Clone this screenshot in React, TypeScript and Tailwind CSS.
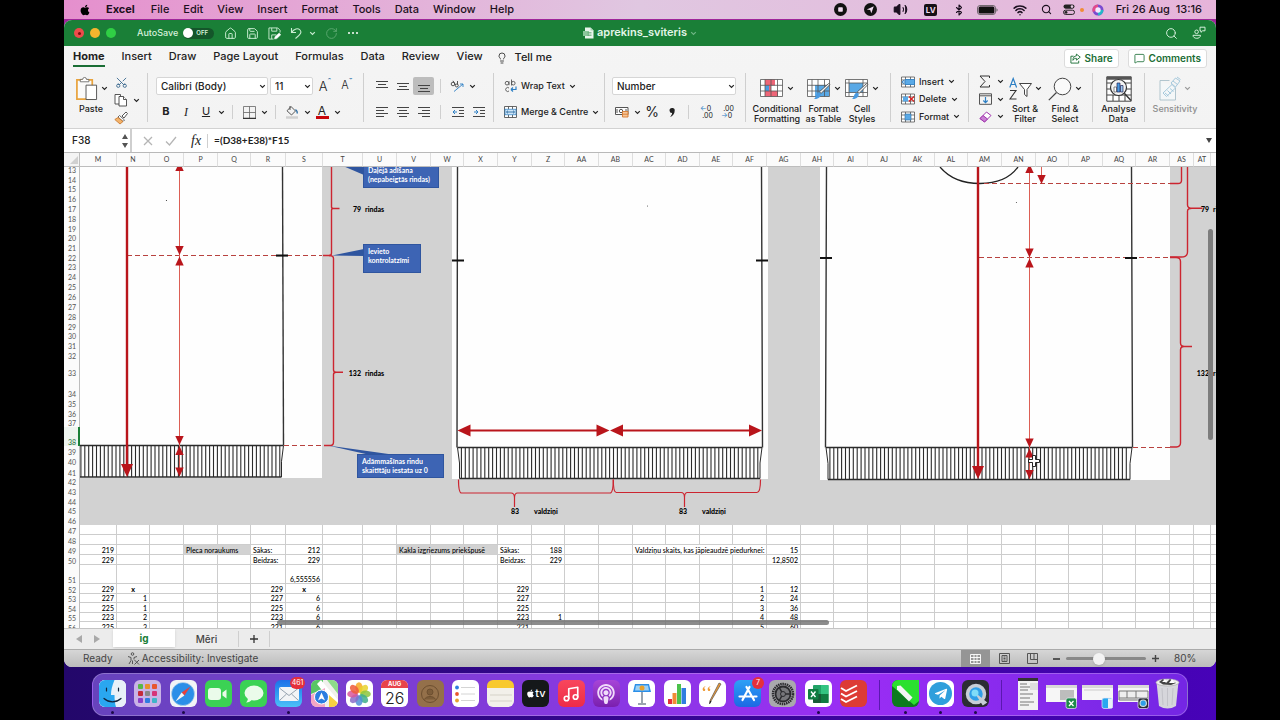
import React from "react";
import {
  Bluetooth,
  Home,
  Lightbulb,
  MessageSquare,
  Music,
  RotateCw,
  Save,
  Scissors,
  Search,
  Volume2,
  Wifi,
} from "lucide-react";
import { FaApple, FaPodcast, FaTelegramPlane } from "react-icons/fa";

const RED = "#b9151b";

const columns: [string, number][] = [
  ["M", 37], ["N", 33], ["O", 34], ["P", 34], ["Q", 33], ["R", 35], ["S", 37],
  ["T", 40], ["U", 34], ["V", 34], ["W", 33], ["X", 34], ["Y", 34], ["Z", 33],
  ["AA", 34], ["AB", 34], ["AC", 33], ["AD", 34], ["AE", 33], ["AF", 34],
  ["AG", 34], ["AH", 33], ["AI", 34], ["AJ", 33], ["AK", 34], ["AL", 33],
  ["AM", 34], ["AN", 34], ["AO", 33], ["AP", 34], ["AQ", 33], ["AR", 34],
  ["AS", 24], ["AT", 17], ["", 34],
];

// row number, height
const rows: [number, number][] = [
  [13, 7], [14, 10], [15, 9], [16, 10], [17, 10], [18, 10], [19, 10], [20, 9],
  [21, 10], [22, 10], [23, 9], [24, 10], [25, 10], [26, 10], [27, 10], [28, 10],
  [29, 10], [30, 9], [31, 10], [32, 10], [33, 17], [34, 21], [35, 10], [36, 10],
  [37, 9], [38, 19], [39, 10], [40, 10], [41, 11], [42, 9], [43, 10], [44, 10],
  [45, 9], [46, 10], [47, 10], [48, 10], [49, 10], [50, 10], [51, 19], [52, 10],
  [53, 9], [54, 10], [55, 9], [56, 10],
];

type Cell = { v: string; a?: "l" | "c"; span?: number; fill?: boolean; bold?: boolean };

const cells: Record<string, Cell> = {
  T17: { v: "79", bold: true }, U17: { v: "rindas", a: "l", bold: true },
  T33: { v: "132", bold: true }, U33: { v: "rindas", a: "l", bold: true },
  AT17: { v: "79", bold: true }, AT33: { v: "132", bold: true },
  "17": { v: "rindas", a: "l", bold: true }, "33": { v: "rindas", a: "l", bold: true },
  Y45: { v: "83", a: "c", bold: true }, Z45: { v: "valdziņi", a: "l", bold: true },
  AD45: { v: "83", a: "c", bold: true }, AE45: { v: "valdziņi", a: "l", bold: true },
  M49: { v: "219" }, M50: { v: "229" }, M52: { v: "229" }, M53: { v: "227" },
  M54: { v: "225" }, M55: { v: "223" }, M56: { v: "225" },
  N52: { v: "x", a: "c", bold: true }, N53: { v: "1" }, N54: { v: "1" }, N55: { v: "2" }, N56: { v: "3" },
  P49: { v: "Pleca noraukums", a: "l", span: 2, fill: true },
  R49: { v: "Sākas:", a: "l" }, R50: { v: "Beidzas:", a: "l" },
  R52: { v: "229" }, R53: { v: "227" }, R54: { v: "225" }, R55: { v: "223" }, R56: { v: "221" },
  S49: { v: "212" }, S50: { v: "229" }, S51: { v: "6,555556" }, S52: { v: "x", a: "c", bold: true },
  S53: { v: "6" }, S54: { v: "6" }, S55: { v: "6" }, S56: { v: "6" },
  V49: { v: "Kakla izgriezums priekšpusē", a: "l", span: 3, fill: true },
  Y49: { v: "Sākas:", a: "l" }, Y50: { v: "Beidzas:", a: "l" },
  Y52: { v: "229" }, Y53: { v: "227" }, Y54: { v: "225" }, Y55: { v: "223" }, Y56: { v: "221" },
  Z49: { v: "188" }, Z50: { v: "229" }, Z55: { v: "1" },
  AC49: { v: "Valdziņu skaits, kas jāpieaudzē piedurknei:", a: "l", span: 4 },
  AG49: { v: "15" }, AG50: { v: "12,8502" },
  AF52: { v: "1" }, AF53: { v: "2" }, AF54: { v: "3" }, AF55: { v: "4" }, AF56: { v: "5" },
  AG52: { v: "12" }, AG53: { v: "24" }, AG54: { v: "36" }, AG55: { v: "48" }, AG56: { v: "60" },
};

function Chev({ className = "text-[#222]" }: { className?: string }) {
  return (
    <svg viewBox="0 0 7 5" className={`h-[5px] w-[7px] shrink-0 ${className}`}>
      <path d="M1.2 1.2 3.5 3.5 5.8 1.2" fill="none" stroke="currentColor" strokeWidth="1.2" />
    </svg>
  );
}

function Sep({ tall = false }: { tall?: boolean }) {
  return <div className={tall ? "h-[49px] w-px shrink-0 bg-[#cfcfcf]" : "mx-[6px] h-3.5 w-px shrink-0 bg-[#cfcfcf]"} />;
}

function Tool({ label, className = "w-5", children }: { label: string; className?: string; children: React.ReactNode }) {
  return (
    <button aria-label={label} className={`flex h-[18px] shrink-0 items-center justify-center ${className}`}>
      {children}
    </button>
  );
}

function Drop({ label }: { label: string }) {
  return (
    <Tool label={label} className="w-2.5">
      <Chev />
    </Tool>
  );
}

function Lines({ d }: { d: string }) {
  return (
    <svg viewBox="0 0 12 12" className="h-3 w-3">
      <path d={d} stroke="#444" strokeWidth="1" />
    </svg>
  );
}

function MenuBar() {
  const items = ["File", "Edit", "View", "Insert", "Format", "Tools", "Data", "Window", "Help"];
  return (
    <nav className="flex h-[19px] shrink-0 items-center overflow-hidden bg-linear-to-r from-[#e58fcd] via-[#e0c7e1] to-[#e6b4da] pr-3.5 pl-[15px] text-[11px] text-[#1c1020]">
      <FaApple className="size-3 shrink-0 text-black" />
      <div className="ml-[15px] flex gap-[14px] whitespace-nowrap">
        <a href="#" className="mr-0.5 font-bold">Excel</a>
        {items.map((i) => (
          <a key={i} href="#" className="font-medium">{i}</a>
        ))}
      </div>
      <div className="ml-auto flex items-center [&>span]:flex [&>span]:shrink-0 [&>span]:justify-center">
        <span className="w-[30px]">
          <svg viewBox="0 0 13 13" className="size-[13px]">
            <circle cx="6.5" cy="6.5" r="6.5" fill="#111" />
            <rect x="4.2" y="4.2" width="4.6" height="4.6" rx="0.8" fill="#f2dcf0" />
          </svg>
        </span>
        <span className="w-[30px]">
          <svg viewBox="0 0 13 13" className="size-[13px]">
            <circle cx="6.5" cy="6.5" r="6.5" fill="#111" />
            <path d="M2.8 6.6 9.8 3.2 7.3 10.2 6.2 7.1z" fill="#f2dcf0" />
          </svg>
        </span>
        <span className="w-[30px]"><Volume2 className="size-[15px]" fill="currentColor" strokeWidth={1.8} /></span>
        <span className="w-[30px]">
          <span className="flex h-3 w-[13px] items-center justify-center rounded-[2px] bg-[#161016] text-[8px] font-bold text-[#f2dcf0]">LV</span>
        </span>
        <span className="w-[26px]"><Bluetooth className="size-3" strokeWidth={2.2} /></span>
        <span className="w-[32px]">
          <svg viewBox="0 0 21 10" className="h-2.5 w-[21px]">
            <rect x="0.5" y="0.5" width="18" height="9" rx="2.5" fill="none" stroke="#555" strokeWidth="0.8" />
            <rect x="1.6" y="1.6" width="15.8" height="6.8" rx="1.5" fill="#111" />
            <path d="M19.5 3.3c1.4.6 1.4 2.8 0 3.4z" fill="#555" />
          </svg>
        </span>
        <span className="w-[32px]"><Wifi className="size-[14px]" strokeWidth={2.6} /></span>
        <span className="w-[22px]"><Search className="size-[11px]" strokeWidth={2.4} /></span>
        <span className="w-[22px]">
          <svg viewBox="0 0 12 11" className="h-[11px] w-3">
            <rect x="0.5" y="0.5" width="11" height="4.2" rx="2.1" fill="#222" />
            <circle cx="9" cy="2.6" r="1.3" fill="#e6c8e2" />
            <rect x="0.5" y="6.2" width="11" height="4.2" rx="2.1" fill="none" stroke="#222" />
            <circle cx="3" cy="8.3" r="1.4" fill="#222" />
          </svg>
        </span>
        <i className="size-[4px] rounded-full bg-[#f08c35]" />
        <span className="w-[28px]">
          <svg viewBox="0 0 12 12" className="size-3">
            <circle cx="6" cy="6" r="5.5" fill="#7a4bd0" />
            <path d="M6 .5A5.5 5.5 0 0 0 .8 8L6 6z" fill="#e24a8a" />
            <path d="M6 11.5A5.5 5.5 0 0 0 11.5 6L6 6z" fill="#26b7c6" />
            <circle cx="6" cy="6" r="2.7" fill="#f4e8ff" />
          </svg>
        </span>
        <time className="ml-1 font-medium whitespace-pre">Fri 26 Aug  13:16</time>
      </div>
    </nav>
  );
}

function TitleBar() {
  return (
    <div className="relative flex h-[26px] shrink-0 items-center bg-[#1a7f37] px-2.5 text-white">
      <div className="flex gap-1.5">
        <button aria-label="Close" className="flex size-2.5 items-center justify-center rounded-full bg-[#ee4b4b]">
          <i className="size-[3px] rounded-full bg-[#7a0d0d]" />
        </button>
        <button aria-label="Minimise" className="size-2.5 rounded-full bg-[#f5b52e]" />
        <button aria-label="Zoom" className="size-2.5 rounded-full bg-[#30cf45]" />
      </div>
      <span className="ml-[21px] text-[9px] font-medium text-[#d6f0dc]">AutoSave</span>
      <button role="switch" aria-checked="false" className="ml-[5px] flex h-[11px] w-[31px] items-center rounded-full bg-[#14562a] text-[6px] font-semibold text-[#d6f0dc]">
        <i className="mr-[3px] size-[10px] rounded-full bg-white" />
        OFF
      </button>
      <div className="ml-2.5 flex items-center gap-[9px] text-[#c9ecd1]">
        <Home className="size-[13px]" strokeWidth={1.8} />
        <Save className="size-[13px]" strokeWidth={1.8} />
        <svg viewBox="0 0 14 14" className="size-[13px]" fill="none" stroke="currentColor">
          <path d="M6 13H1V1h9.500L13 3.500V6M4 1v3.500h5.500V1M4 13V8.500h5" />
          <path d="m7 13 .5-2.500 4.500-4 1.800 1.800-4.300 4.200z" fill="#fff" stroke="#fff" strokeWidth="0.500" />
        </svg>
        <svg viewBox="0 0 12 12" className="size-3" fill="none" stroke="currentColor" strokeWidth="1.100">
          <path d="M1.500 1v4.500H6M1.500 5.500C4 1.500 8 .8 10 3s.8 4.500-4.500 8.500" />
        </svg>
        <Chev className="-ml-0.5 text-[#c9ecd1]" />
        <RotateCw className="size-[13px] opacity-40" strokeWidth={1.6} />
        <svg viewBox="0 0 12 4" className="h-1 w-3" fill="#fff">
          <circle cx="2" cy="2" r="1" />
          <circle cx="6" cy="2" r="1" />
          <circle cx="10" cy="2" r="1" />
        </svg>
      </div>
      <div className="absolute inset-x-0 flex items-center justify-center gap-[3px]">
        <svg viewBox="0 0 11 12" className="h-3 w-[11px]">
          <path d="M2 .5h5.5l3 3v8H2z" fill="#e9f5ec" />
          <path d="M7.5.5v3h3" fill="#a8d5b3" />
          <rect x="0" y="4" width="6" height="5" fill="#8cc79c" />
          <path d="M4.5 5.5h4M4.5 7h4M4.5 8.500h4" stroke="#5ea873" strokeWidth="0.7" />
        </svg>
        <h1 className="text-[11px] font-semibold text-[#e4f6e8]">aprekins_sviteris</h1>
        <Chev className="text-[#6fb685]" />
      </div>
      <div className="ml-auto flex items-center gap-[14px] text-[#d6f0dc]">
        <Search className="size-[13px]" strokeWidth={1.8} />
        <svg viewBox="0 0 14 14" className="size-[14px]" fill="none" stroke="currentColor">
          <circle cx="4.6" cy="5.8" r="1.8" />
          <path d="M1 9.3h7.5c0 4-7.5 4-7.5 0z" />
          <path d="M8 1.2h5v3.6h-2.4L9 6.3V4.8H8z" />
        </svg>
      </div>
    </div>
  );
}

function RibbonTabs() {
  const tabs = ["Home", "Insert", "Draw", "Page Layout", "Formulas", "Data", "Review", "View"];
  return (
    <div className="flex h-[23px] shrink-0 items-center gap-[17px] px-[9px] text-[11px] font-medium text-[#222]">
      {tabs.map((t) => (
        <button
          key={t}
          className={
            t === "Home"
              ? "h-[18px] border-b-2 border-[#1a6e35] font-bold whitespace-nowrap"
              : "h-[18px] border-b-2 border-transparent whitespace-nowrap"
          }
        >
          {t}
        </button>
      ))}
      <button className="-ml-1 flex items-center gap-[7px] whitespace-nowrap">
        <Lightbulb className="size-3" strokeWidth={1.6} />
        Tell me
      </button>
      <div className="ml-auto flex gap-[9px] pt-0.5 text-[10px] font-semibold text-[#1a6e35]">
        <button className="flex h-[19px] items-center gap-1 rounded-[3px] border border-[#dcdcdc] bg-white px-[5px]">
          <svg viewBox="0 0 12 12" className="size-[11px]" fill="none" stroke="currentColor">
            <path d="M4 3.500H1v7.500h8.500V8.500" />
            <path d="M7 1.200 11.200 4.500 7 7.800V5.800C5 5.800 4 6.500 3.200 8c0-3 1.500-4.700 3.800-4.900z" />
          </svg>
          Share
        </button>
        <button className="flex h-[19px] items-center gap-1 rounded-[3px] border border-[#dcdcdc] bg-white px-[5px]">
          <MessageSquare className="size-[11px]" strokeWidth={1.8} />
          Comments
        </button>
      </div>
    </div>
  );
}

function BigTool({ lines, className, drop = true, muted = false, children }: {
  lines: string[]; className: string; drop?: boolean; muted?: boolean; children: React.ReactNode;
}) {
  return (
    <button className={`flex shrink-0 flex-col items-center ${className}`}>
      <span className="flex h-[31px] shrink-0 items-center gap-[3px]">
        {children}
        {drop && <Chev className={muted ? "text-[#999]" : "text-[#222]"} />}
      </span>
      {lines.map((l) => (
        <span key={l} className={`leading-[10px] whitespace-nowrap ${muted ? "text-[#8f8f8f]" : ""}`}>{l}</span>
      ))}
    </button>
  );
}

function TableIcon({ kind }: { kind: "cond" | "table" | "cell" }) {
  return (
    <svg viewBox="0 0 24 22" className="h-[22px] w-6 shrink-0">
      <rect x="0.5" y="1.5" width="22" height="17" fill="#fff" />
      {kind === "cond" && (
        <>
          <path d="M5 1.5h10v6H5zM5 13h13v5.5H5z" fill="#ee6577" />
          <path d="M5 7.5h6V13H5z" fill="#ee6577" />
          <path d="M5 7.5h4V13H5z" fill="#4a9ae0" />
        </>
      )}
      {kind === "table" && <path d="M8 7h14v11.5H8z" fill="#5aa9e6" />}
      {kind === "cell" && <path d="M4 5h14v9.500H4z" fill="#5aa9e6" />}
      {kind === "cell" ? (
        <path d="M.5 1.500h22v17H.5zM4 1.500v17M18 1.500v17M.5 5h22M.5 14.500h22" fill="none" stroke="#555" strokeWidth="0.8" />
      ) : (
        <path d="M.5 1.500h22v17H.5zM5 1.500v17M11 1.500v17M17.500 1.500v17M.5 7.300h22M.5 13h22" fill="none" stroke="#555" strokeWidth="0.8" />
      )}
      {kind !== "cond" && (
        <>
          <path d="M23 6.500 14 15.500l-1.500-1.800L21.500 5.600z" fill="#f2f2f2" stroke="#444" strokeWidth="0.8" />
          <path d="M13.500 15.500c1 3-2 6-6.500 5.500 2-1 1.500-5 4.500-6.500z" fill="#4a9ae0" />
        </>
      )}
    </svg>
  );
}

function RowIcon({ kind }: { kind: "insert" | "delete" | "format" }) {
  return (
    <svg viewBox="0 0 14 12" className="h-3 w-3.5">
      <path d="M.5 1h13v10H.5zM.5 4h13M.5 8h13M4.500 1v10M9.500 1v10" fill="#fff" stroke="#555" strokeWidth="0.8" />
      {kind === "insert" && <path d="M4 3.500h9.500v5H4zM4 6 1 6m0 0 2-2M1 6l2 2" fill="#5aa9e6" stroke="#2c7fc4" strokeWidth="0.8" />}
      {kind === "delete" && (
        <>
          <rect x="2" y="3.500" width="5" height="5" fill="#5aa9e6" />
          <path d="M8 3.500l5 5M13 3.500l-5 5" stroke="#d22" strokeWidth="1.200" />
        </>
      )}
      {kind === "format" && <rect x="4" y="3" width="6" height="6" fill="#5aa9e6" stroke="#2c6ea4" strokeWidth="0.6" />}
    </svg>
  );
}

function Ribbon() {
  return (
    <div className="flex h-[60px] shrink-0 items-start overflow-hidden border-b border-[#d2d2d2] pt-1 text-[9px] font-medium text-[#222]">
      {/* Clipboard */}
      <div className="flex w-[83px] shrink-0 pl-2.5">
        <BigTool lines={["Paste"]} className="w-[34px]">
          <svg viewBox="0 0 24 26" className="h-[25px] w-[23px] shrink-0">
            <path d="M2 4h16v20H2z" fill="#fafafa" stroke="#e8a33d" strokeWidth="1.800" />
            <path d="M5.500 6V3.500h2.500a2 2 0 0 1 4 0h2.500V6z" fill="#fff" stroke="#666" strokeWidth="0.900" />
            <path d="M11.500 9.500h11v15h-11z" fill="#fff" stroke="#555" strokeWidth="1" />
          </svg>
        </BigTool>
        <div className="ml-[3px] w-[30px]">
          <Tool label="Cut"><Scissors className="size-[13px] -rotate-90 text-[#35658c]" strokeWidth={1.6} /></Tool>
          <div className="flex">
            <Tool label="Copy">
              <svg viewBox="0 0 14 14" className="size-3.5" fill="#fff" stroke="#444" strokeWidth="0.900">
                <path d="M1 1.500h5.500V11H1z" />
                <path d="M5 3.500h4.500l3 3V13H5z" />
                <path d="M9.500 3.500v3h3" />
              </svg>
            </Tool>
            <Drop label="Copy options" />
          </div>
          <Tool label="Format painter">
            <svg viewBox="0 0 14 14" className="size-3.5">
              <path d="M8 5 12 1l1.500 1.500L10 7z" fill="#fff" stroke="#555" />
              <path d="M5.500 4.500 10.500 9 9 10.500 4 6z" fill="#fff" stroke="#555" strokeWidth="0.900" />
              <path d="M4 6.500.800 8.500 6 13l3-2.500z" fill="#f3b36b" stroke="#c5742a" strokeWidth="0.800" />
            </svg>
          </Tool>
        </div>
      </div>
      <Sep tall />
      {/* Font */}
      <div className="flex w-[215px] shrink-0 flex-col gap-2 pt-1 pl-2">
        <div className="flex h-[18px] items-center gap-0.5 text-[10px]">
          <label className="relative flex items-center">
            <select aria-label="Font" className="h-[18px] w-[112px] appearance-none rounded-[2px] border border-[#d6d6d6] bg-white pl-1">
              <option>Calibri (Body)</option>
            </select>
            <Chev className="pointer-events-none absolute right-0.5" />
          </label>
          <label className="relative flex items-center">
            <select aria-label="Font size" className="h-[18px] w-[43px] appearance-none rounded-[2px] border border-[#d6d6d6] bg-white pl-1">
              <option>11</option>
            </select>
            <Chev className="pointer-events-none absolute right-0.5" />
          </label>
          <Tool label="Increase font size"><span className="text-[13px] font-light">A</span><sup className="text-[9px] text-[#2c6ea4]">ˆ</sup></Tool>
          <Tool label="Decrease font size"><span className="text-[11px] font-light">A</span><sup className="text-[9px] text-[#2c6ea4]">ˇ</sup></Tool>
        </div>
        <div className="flex h-[18px] items-center text-[11px]">
          <Tool label="Bold"><b>B</b></Tool>
          <Tool label="Italic"><span className="font-['Liberation_Serif'] text-xs italic">I</span></Tool>
          <Tool label="Underline"><span className="font-normal underline">U</span></Tool>
          <Drop label="Underline options" />
          <Sep />
          <Tool label="Borders">
            <svg viewBox="0 0 13 13" className="size-[13px]" fill="none" stroke="#666">
              <path d="M.5 12.500V.5h12v12M6.500.5v12M.5 6.500h12" strokeWidth="0.800" />
              <path d="M0 12.300h13" stroke="#333" strokeWidth="1.300" />
            </svg>
          </Tool>
          <Drop label="Border options" />
          <Sep />
          <Tool label="Fill colour">
            <svg viewBox="0 0 14 14" className="size-3.5" fill="none" stroke="#444" strokeWidth="0.900">
              <path d="M6 1.500 10.500 6 6.500 10 2 5.800zM5 1v4" />
              <path d="M10.500 4.500c1.500 1 2 2 1.800 4" stroke="#2c6ea4" strokeWidth="1.400" />
              <path d="M1 12.500h12" stroke="#d0d0d0" strokeWidth="2.400" />
            </svg>
          </Tool>
          <Drop label="Fill options" />
          <Tool label="Font colour" className="w-5 flex-col">
            <span className="text-xs leading-[11px] font-normal">A</span>
            <i className="h-[3px] w-[13px] bg-[#c8060b]" />
          </Tool>
          <Drop label="Font colour options" />
        </div>
      </div>
      <Sep tall />
      {/* Alignment */}
      <div className="flex w-[129px] shrink-0 flex-col gap-2 pt-1 pl-[7px]">
        <div className="flex h-[18px] items-center">
          <Tool label="Top align" className="w-[21px]"><Lines d="M0 1.500h12M2 4.500h8M0 7.500h12" /></Tool>
          <Tool label="Middle align" className="w-[21px]"><Lines d="M0 3.500h12M2 6.500h8M0 9.500h12" /></Tool>
          <Tool label="Bottom align" className="w-[21px] rounded-[2px] bg-[#bdbdbd]"><Lines d="M0 5.500h12M2 8.500h8M0 11.500h12" /></Tool>
          <Sep />
          <Tool label="Orientation">
            <svg viewBox="0 0 14 12" className="h-3 w-3.5" fill="none" stroke="#444" strokeWidth="0.900">
              <circle cx="3" cy="4" r="1.800" />
              <path d="M3 .8 5.500 5M7.500 1v3.500" />
              <circle cx="6.800" cy="5.500" r="1.500" />
              <path d="M4 11.500 13 4M13 4h-3M13 4v3" stroke="#2c7fc4" />
            </svg>
          </Tool>
          <Drop label="Orientation options" />
        </div>
        <div className="flex h-[18px] items-center">
          <Tool label="Left align" className="w-[21px]"><Lines d="M0 1.500h12M0 4.500h8M0 7.500h12M0 10.500h8" /></Tool>
          <Tool label="Centre" className="w-[21px]"><Lines d="M0 1.500h12M2 4.500h8M0 7.500h12M2 10.500h8" /></Tool>
          <Tool label="Right align" className="w-[21px]"><Lines d="M0 1.500h12M4 4.500h8M0 7.500h12M4 10.500h8" /></Tool>
          <Sep />
          {["M5 6H1M1 6l2-2M1 6l2 2", "M1 6h4M5 6 3 4M5 6 3 8"].map((d) => (
            <Tool key={d} label="Indent" className="w-[21px]">
              <svg viewBox="0 0 12 12" className="size-3" fill="none">
                <path d="M0 1.500h12M7 4.500h5M7 7.500h5M0 10.500h12" stroke="#444" />
                <path d={d} stroke="#2c7fc4" />
              </svg>
            </Tool>
          ))}
        </div>
      </div>
      <Sep tall />
      <div className="flex w-[110px] shrink-0 flex-col gap-2 pt-1 pl-2.5 whitespace-nowrap">
        <button className="flex h-[18px] items-center gap-1">
          <svg viewBox="0 0 13 14" className="h-3.5 w-[13px]" fill="none" stroke="#555" strokeWidth="0.900">
            <circle cx="3" cy="4.200" r="1.800" />
            <path d="M5 2.200v4M7.500.5v6" />
            <circle cx="9.300" cy="4.200" r="1.800" />
            <path d="M5 9a2 2 0 1 0 0 3" />
            <path d="M12 7.500v3H7M7 10.500l2-2M7 10.500l2 2" stroke="#2c7fc4" strokeWidth="1.200" />
          </svg>
          Wrap Text
          <Chev />
        </button>
        <button className="flex h-[18px] items-center gap-1">
          <svg viewBox="0 0 13 12" className="h-3 w-[13px]">
            <path d="M.5.5h12v11H.5zM4.500.5v11M8.500.5v11" fill="#fff" stroke="#555" strokeWidth="0.900" />
            <rect x="1" y="3.200" width="11" height="5.600" fill="#cfe6f8" stroke="#2c7fc4" strokeWidth="0.700" />
            <path d="M2.500 6h8M2.500 6 4 4.600M2.500 6 4 7.400M10.500 6 9 4.600M10.500 6 9 7.400" stroke="#2c6ea4" strokeWidth="0.900" fill="none" />
          </svg>
          Merge &amp; Centre
          <Chev />
        </button>
      </div>
      <Sep tall />
      {/* Number */}
      <div className="flex w-[140px] shrink-0 flex-col gap-2 pt-1 pl-[7px]">
        <label className="relative flex items-center text-[10px]">
          <select aria-label="Number format" className="h-[18px] w-[124px] appearance-none rounded-[2px] border border-[#d6d6d6] bg-white pl-1">
            <option>Number</option>
          </select>
          <Chev className="pointer-events-none absolute right-2.5" />
        </label>
        <div className="flex h-[18px] items-center">
          <Tool label="Currency">
            <svg viewBox="0 0 14 12" className="h-3 w-3.5">
              <path d="M.5 1.500h12.500v7H.5z" fill="#fff" stroke="#555" />
              <circle cx="6" cy="5" r="1.700" fill="none" stroke="#555" />
              <path d="M2 3v4M11 3v2" stroke="#555" />
              <path d="M7.500 5.500h5.500v5.500H7.500z" fill="#f6c79b" stroke="#d8792c" strokeWidth="0.900" />
              <path d="M7.500 8.200H13" stroke="#d8792c" strokeWidth="0.900" />
            </svg>
          </Tool>
          <Drop label="Currency options" />
          <Tool label="Percent"><span className="text-sm font-normal">%</span></Tool>
          <Tool label="Comma style">
            <svg viewBox="0 0 8 11" className="h-[11px] w-2">
              <path d="M4 1a2.500 2.500 0 0 1 2.700 2.700C6.700 7 4.500 9.300 2 10c1.300-1.300 2-2.500 2.100-3.900A2.500 2.500 0 1 1 4 1z" fill="#222" />
            </svg>
          </Tool>
          <Sep />
          <Tool label="Increase decimal" className="w-[21px] flex-col text-[7px] leading-[7px] font-normal">
            <span><span className="text-[#2c7fc4]">←</span>0</span>
            <span className="pl-1">.00</span>
          </Tool>
          <Tool label="Decrease decimal" className="w-[21px] flex-col text-[7px] leading-[7px] font-normal">
            <span className="pl-1">.00</span>
            <span><span className="text-[#2c7fc4]">→</span>0</span>
          </Tool>
        </div>
      </div>
      <Sep tall />
      {/* Styles */}
      <div className="flex w-[144px] shrink-0">
        <BigTool lines={["Conditional", "Formatting"]} className="w-[62px]"><TableIcon kind="cond" /></BigTool>
        <BigTool lines={["Format", "as Table"]} className="w-[31px]"><TableIcon kind="table" /></BigTool>
        <BigTool lines={["Cell", "Styles"]} className="w-[46px]"><TableIcon kind="cell" /></BigTool>
      </div>
      <Sep tall />
      {/* Cells */}
      <div className="w-[77px] shrink-0 pl-2.5">
        <button className="flex h-[17px] items-center gap-1"><RowIcon kind="insert" />Insert<Chev /></button>
        <button className="flex h-[18px] items-center gap-1"><RowIcon kind="delete" />Delete<Chev /></button>
        <button className="flex h-[17px] items-center gap-1"><RowIcon kind="format" />Format<Chev /></button>
      </div>
      <Sep tall />
      {/* Editing */}
      <div className="flex w-[123px] shrink-0 pl-[6px]">
        <div className="w-[30px] shrink-0">
          <div className="flex h-[17px] items-center">
            <Tool label="AutoSum">
              <svg viewBox="0 0 12 13" className="h-[13px] w-3">
                <path d="M10.500 3V1H1l5 5.500L1 12h9.500v-2" fill="none" stroke="#333" />
              </svg>
            </Tool>
            <Drop label="AutoSum options" />
          </div>
          <div className="flex h-[18px] items-center">
            <Tool label="Fill">
              <svg viewBox="0 0 13 12" className="h-3 w-[13px]" fill="none">
                <path d="M.5.8h12v10.500H.5zM.5 2.800h12" stroke="#555" />
                <path d="M6.500 4v5.500M4.300 7.500l2.200 2.200 2.200-2.200" stroke="#2c7fc4" strokeWidth="1.200" />
              </svg>
            </Tool>
            <Drop label="Fill options" />
          </div>
          <div className="flex h-[17px] items-center">
            <Tool label="Clear">
              <svg viewBox="0 0 13 12" className="h-3 w-[13px]">
                <path d="M1 7.500 7.500 1 12 4.500 5.500 11z" fill="#fff" stroke="#a035ad" />
                <path d="M1 7.500 4 4.500 8.500 8 5.500 11z" fill="#c97fd3" stroke="#a035ad" />
              </svg>
            </Tool>
            <Drop label="Clear options" />
          </div>
        </div>
        <BigTool lines={["Sort &", "Filter"]} className="w-[40px]">
          <svg viewBox="0 0 23 24" className="h-6 w-[23px] shrink-0" fill="none">
            <path d="M.8 10.500 4.200 1.500 7.600 10.500M2 7.500h4.500" stroke="#2c7fc4" strokeWidth="1.200" />
            <path d="M1 13.500h6L1 22h6.500" stroke="#333" strokeWidth="1.100" />
            <path d="M10.500 6.500h12L18 12.500v7l-2.500-2v-5z" fill="#fff" stroke="#444" />
          </svg>
        </BigTool>
        <BigTool lines={["Find &", "Select"]} className="w-[40px]">
          <svg viewBox="0 0 24 24" className="size-6 shrink-0" fill="none" stroke="#444">
            <circle cx="14.500" cy="9.500" r="8.300" fill="#fafafa" />
            <path d="M8.500 15.500.8 23.200" strokeWidth="1.200" />
          </svg>
        </BigTool>
      </div>
      <Sep tall />
      <BigTool lines={["Analyse", "Data"]} className="w-[51px]" drop={false}>
        <svg viewBox="0 0 26 26" className="size-[26px] shrink-0">
          <path d="M.8.8h24.400v24.400H.8zM.8 7h24.400M.8 13h24.400M.8 19h24.400M7 19v6M13 19v6M19 19v6" fill="#fff" stroke="#444" />
          <path d="M.8.8h24.400v3H.8z" fill="#555" />
          <circle cx="12.500" cy="11.500" r="8" fill="#f4f4f4" stroke="#333" strokeWidth="1.200" />
          <path d="M18.300 17.300 25 24.500" stroke="#333" strokeWidth="1.400" />
          <path d="M8 11h2.500v5H8z" fill="#fff" stroke="#555" strokeWidth="0.700" />
          <path d="M11 7h3v9h-3z" fill="#4a9ae0" stroke="#225" strokeWidth="0.700" />
          <path d="M14.500 9.500h2.500V16h-2.500z" fill="#9cc9ef" stroke="#225" strokeWidth="0.700" />
        </svg>
      </BigTool>
      <Sep tall />
      <BigTool lines={["Sensitivity"]} className="w-[60px]" muted>
        <svg viewBox="0 0 22 26" className="h-[26px] w-[22px] shrink-0" fill="none" stroke="#a9bfca" strokeWidth="0.900">
          <path d="M1 4.500h9.500M1 4.500V24h15.500V12" fill="#f4f7f8" />
          <path d="m4 17 9-8.500 3.500 3.500-9 8.500zM6 17l3.500 3M8.500 14.500l3.500 3.500M11 12.500l3.500 3" stroke="#9cc3d8" />
          <path d="m12 7 4.500-5 4.500 3-4.500 6zM18 1l3.500 2.500M14 5l4.500 3.500" stroke="#9cc3d8" />
        </svg>
      </BigTool>
    </div>
  );
}

function FormulaBar() {
  return (
    <div className="flex h-[24px] shrink-0 items-center border-b border-[#b9b9b9] bg-white text-[#222]">
      <div className="flex h-full w-[68px] items-center border-r-2 border-[#cfcfcf]">
        <input aria-label="Name box" defaultValue="F38" className="w-[58px] pl-2 text-[10px] font-medium outline-none" />
        <svg viewBox="0 0 6 14" className="h-3.5 w-1.5" fill="#555">
          <path d="M3 0 6 5H0zM3 14 6 9H0z" />
        </svg>
      </div>
      <svg viewBox="0 0 10 10" className="ml-[11px] size-2.5" stroke="#b5b5b5" strokeWidth="1.300">
        <path d="M1 1l8 8M9 1 1 9" />
      </svg>
      <svg viewBox="0 0 12 10" className="ml-3 h-2.5 w-3" fill="none" stroke="#b5b5b5" strokeWidth="1.300">
        <path d="M1 5.500 4.500 9 11 1" />
      </svg>
      <span className="ml-3.5 font-['Liberation_Serif'] text-[14px] italic">fx</span>
      <Sep />
      <input aria-label="Formula" defaultValue="=(D38+E38)*F15" className="min-w-0 flex-1 font-['Lato'] text-[10px] font-bold outline-none" />
      <svg viewBox="0 0 6 5" className="mr-1 h-[5px] w-1.5" fill="#444">
        <path d="M0 0h6L3 5z" />
      </svg>
    </div>
  );
}

// filled arrowhead with its tip at x, y
function Head({ x, y, dir, s = 4.2, l = 9 }: { x: number; y: number; dir: "u" | "d" | "l" | "r"; s?: number; l?: number }) {
  const p = {
    u: `${x},${y} ${x - s},${y + l} ${x + s},${y + l}`,
    d: `${x},${y} ${x - s},${y - l} ${x + s},${y - l}`,
    l: `${x},${y} ${x + l},${y - s} ${x + l},${y + s}`,
    r: `${x},${y} ${x - l},${y - s} ${x - l},${y + s}`,
  }[dir];
  return <polygon points={p} fill={RED} />;
}

function Rib({ x1, x2, y1, y2, left = true }: { x1: number; x2: number; y1: number; y2: number; left?: boolean }) {
  const stripes: number[] = [];
  for (let x = x1 + 3.9; x < x2 - 2; x += 3.9) stripes.push(x);
  const h = y2 - y1;
  return (
    <g fill="none" stroke="#2b2b2b">
      {stripes.map((x) => (
        <path key={x} d={`M${x} ${y1}V${y2}`} strokeWidth="1.100" />
      ))}
      <path d={`M${x1} ${y1}H${x2}`} strokeWidth="1.300" />
      <path d={`M${left ? x1 + 2 : x1} ${y2}H${x2 - 2}`} strokeWidth="1.300" />
      <path d={`M${x2} ${y1}q-3 ${h / 2} -2 ${h}`} />
      {left && <path d={`M${x1} ${y1}q3 ${h / 2} 2 ${h}`} />}
    </g>
  );
}

function Drawing() {
  return (
    <svg viewBox="80 167 1136 461" className="pointer-events-none absolute top-0 left-4 h-[461px] w-[1136px]" fill="none">
      {/* back */}
      <rect x="80" y="167" width="242" height="311" fill="#fefefe" />
      <path d="M282.500 167 283.500 445" stroke="#333" strokeWidth="1.400" />
      <Rib x1={77} x2={283.5} y1={445.5} y2={477} left={false} />
      <path d="M127 255.500H322M284 445.500h38" stroke="#b8423f" strokeDasharray="5 3" />
      <path d="M276 255.500h12" stroke="#111" strokeWidth="2.200" />
      <path d="M127 167V466" stroke={RED} strokeWidth="2.400" />
      <Head x={127} y={477} dir="d" s={6} l={13} />
      <path d="M179.500 167V476" stroke="#dc5f55" strokeWidth="1" />
      <Head x={179.5} y={162} dir="u" />
      <Head x={179.5} y={255} dir="d" />
      <Head x={179.5} y={256.500} dir="u" />
      <Head x={179.5} y={445} dir="d" />
      <Head x={179.5} y={446} dir="u" />
      <Head x={179.5} y={476.500} dir="d" />
      <circle cx="166.500" cy="200.500" r="0.600" fill="#333" />
      <g stroke="#cc2530" strokeWidth="1.400">
        <path d="M331.500 167V207q0 1.500 2 1.500h6M333 208.500q-1.500 0-1.500 2V253q0 2.500-2 2.500H323" />
        <path d="M329 255.500q4.500 0 4.500 3V370q0 2.300 3 2.300h6.500M336 372.300q-2.500 0-2.500 2.300V442q0 3.500-3 3.500H324" />
      </g>
      {/* callout tails */}
      <path d="M343 166 364 175v-9z" fill="#2f559f" />
      <path d="M332 255.500 364 249v7z" fill="#2f559f" />
      <path d="M328 445.500 368 454.500h24z" fill="#2f559f" />

      {/* sleeve width */}
      <rect x="452" y="167" width="316" height="312" fill="#fefefe" />
      <path d="M457.500 167 457 447.500M761.500 167 762.500 447.500" stroke="#333" strokeWidth="1.400" />
      <path d="M452 260.500h12M756 260.500h12" stroke="#111" strokeWidth="2.200" />
      <path d="M466 430.500H602M619 430.500H754" stroke={RED} strokeWidth="1.800" />
      <Head x={457.5} y={430.5} dir="l" s={6} l={13} />
      <Head x={609.5} y={430.5} dir="r" s={6} l={13} />
      <Head x={610} y={430.5} dir="l" s={6} l={13} />
      <Head x={762} y={430.5} dir="r" s={6} l={13} />
      <Rib x1={457.5} x2={762} y1={447.5} y2={478.5} />
      <circle cx="647.500" cy="206" r="0.600" fill="#555" />
      <g stroke="#cc2530" strokeWidth="1.200">
        <path d="M458.500 479.500q0 13.500 3 13.500H511q3.500 0 3.500 5V507M514.500 507V498q0-5 3-5H610q3.300 0 3.300-13.500" />
        <path d="M613.300 479.500q0 13 3 13H681q3.500 0 3.500 5V507M684.500 507v-9.500q0-5 3-5H757q3.500 0 3.500-13" />
      </g>

      {/* front */}
      <rect x="820" y="167" width="350" height="313" fill="#fefefe" />
      <path d="M826.500 167 825.500 447.500M1131.500 167 1132.500 447.500" stroke="#333" strokeWidth="1.400" />
      <path d="M940 167Q954 183.500 980 183.500T1018 167" stroke="#222" strokeWidth="1.300" />
      <Rib x1={826} x2={1132} y1={447.500} y2={479.500} />
      <path d="M984 183.500H1170M979 257.500H1170M1133 447.500h37" stroke="#b8423f" strokeDasharray="5 3" />
      <path d="M820 258h12M1125 258h12" stroke="#111" strokeWidth="2.200" />
      <path d="M978 167V468" stroke={RED} strokeWidth="2.400" />
      <Head x={978} y={479} dir="d" s={6} l={13} />
      <path d="M1029.500 167V479M1041.500 167v14" stroke="#dc5f55" strokeWidth="1" />
      <Head x={1029.5} y={164} dir="u" />
      <Head x={1041.5} y={184} dir="d" />
      <Head x={1029.5} y={257.500} dir="d" />
      <Head x={1029.5} y={258.500} dir="u" />
      <Head x={1029.5} y={447.500} dir="d" />
      <Head x={1029.5} y={448.500} dir="u" />
      <Head x={1029.5} y={479} dir="d" />
      <circle cx="1016.500" cy="202.500" r="0.600" fill="#555" />
      <g stroke="#cc2530" strokeWidth="1.400">
        <path d="M1170 183.500h8q3.500 0 3.500-3V167" />
        <path d="M1187.500 167V205q0 3.300 5 3.300h10M1192 208.300q-4.500 0-4.500 3V252q0 5-6 5H1170" />
        <path d="M1170 257.500h6q4.500 0 4.500 4V343q0 3.500 4 3.500h7.500M1184 346.500q-3.500 0-3.500 3.500V443q0 3.500-4 4H1170" />
      </g>
      {/* cell cursor */}
      <path d="M1032.500 455.500h3v4h4v3h-4v4h-3v-4h-4v-3h4z" fill="#fff" stroke="#111" strokeWidth="0.900" />
    </svg>
  );
}

function Sheet() {
  return (
    <div className="relative min-h-0 flex-1 overflow-hidden bg-white font-['Lato'] text-[7px] leading-[7px]">
      <table className="w-full table-fixed border-separate border-spacing-0">
        <colgroup>
          <col className="w-4" />
          {columns.map(([name, w]) => (
            <col key={name} style={{ width: w }} />
          ))}
        </colgroup>
        <thead className="text-[#444]">
          <tr className="h-[14px]">
            <th className="border-r border-b border-[#bdbdbd] bg-[#f4f4f4] p-0">
              <svg viewBox="0 0 10 10" className="ml-auto size-2.5" fill="#d0d0d0"><path d="M9 1v8H1z" /></svg>
            </th>
            {columns.map(([name]) => (
              <th key={name} className="border-r border-b border-r-[#dedede] border-b-[#bdbdbd] bg-[#fbfbfb] p-0 font-normal">
                {name}
              </th>
            ))}
          </tr>
        </thead>
        <tbody>
          {rows.map(([n, h]) => {
            let skip = 0;
            return (
              <tr key={n} style={{ height: h }}>
                <th
                  className={
                    n === 38
                      ? "border-r-2 border-r-[#1a7f37] bg-[#eef4ef] p-0 pr-[2px] text-right align-bottom font-normal text-[#1a6e35]"
                      : "border-r border-r-[#bdbdbd] bg-[#fbfbfb] p-0 pr-[3px] text-right align-bottom font-normal text-[#555]"
                  }
                >
                  {n}
                </th>
                {columns.map(([name]) => {
                  if (skip > 0) {
                    skip--;
                    return null;
                  }
                  const c = cells[name + n];
                  if (c?.span) skip = c.span - 1;
                  const look = n < 47 ? "bg-[#d2d2d2]" : c?.fill ? "border-r border-b border-[#d0d0d0] bg-[#d2d2d2]" : "border-r border-b border-[#cdcdcd]";
                  const align = c?.a === "l" ? "text-left pl-0.5" : c?.a === "c" ? "text-center" : "text-right pr-0.5";
                  return (
                    <td
                      key={name}
                      colSpan={c?.span}
                      className={`p-0 align-bottom whitespace-nowrap text-black ${look} ${align} ${c?.bold ? "font-black" : "font-medium"}`}
                    >
                      {c?.v}
                    </td>
                  );
                })}
              </tr>
            );
          })}
        </tbody>
      </table>
      {/* shapes floating over the cells */}
      <div className="absolute inset-x-0 top-[14px] bottom-0 overflow-hidden">
        <Drawing />
        <div className="absolute top-[-4px] left-[299px] h-[25px] w-[76px] border border-[#2f559f] bg-[#3d64b4] pt-0.5 pl-1 leading-[9px] font-bold whitespace-nowrap text-white">
          Daļējā adīšana<br />(nepabeigtās rindas)
        </div>
        <div className="absolute top-[77px] left-[299px] h-[29px] w-[58px] border border-[#2f559f] bg-[#3d64b4] pt-0.5 pl-1 leading-[9px] font-bold whitespace-nowrap text-white">
          Ievieto<br />kontrolatzīmi
        </div>
        <div className="absolute top-[287px] left-[293px] h-[24px] w-[87px] border border-[#2f559f] bg-[#3d64b4] pt-0.5 pl-1 leading-[9px] font-bold whitespace-nowrap text-white">
          Adāmmašīnas rindu<br />skaitītāju iestata uz 0
        </div>
      </div>
      <div className="absolute top-[76px] right-[3px] h-[211px] w-[5px] rounded-full bg-[#7d7d7d]" />
      <div className="absolute bottom-[3px] left-[213px] h-[5px] w-[552px] rounded-full bg-[#6f6f6f]/80" />
    </div>
  );
}

function SheetTabs() {
  return (
    <div className="flex h-[21px] shrink-0 border-t border-[#c4c4c4] bg-[#ececec] text-[10px] text-[#444]">
      <div className="flex w-[49px] shrink-0 items-center gap-3 pl-3">
        <svg viewBox="0 0 6 8" className="h-2 w-1.5" fill="#a9a9a9"><path d="M6 0v8L0 4z" /></svg>
        <svg viewBox="0 0 6 8" className="h-2 w-1.5" fill="#a9a9a9"><path d="M0 0v8l6-4z" /></svg>
      </div>
      <button className="mb-0.5 w-[62px] bg-white font-bold text-[#1a7f37] shadow-sm">ig</button>
      <button className="my-0.5 w-[64px] border-r border-[#cfcfcf] font-medium">Mēri</button>
      <button aria-label="Add sheet" className="my-0.5 flex w-[31px] items-center justify-center border-r border-[#cfcfcf]">
        <svg viewBox="0 0 8 8" className="size-2" stroke="#333" strokeWidth="1.300"><path d="M4 0v8M0 4h8" /></svg>
      </button>
    </div>
  );
}

function StatusBar() {
  return (
    <div className="flex h-[18px] shrink-0 items-center border-t border-[#aaa] bg-linear-to-b from-[#d6d6d6] to-[#bcbcbc] pl-[19px] text-[10px] text-[#444]">
      <span>Ready</span>
      <svg viewBox="0 0 13 13" className="mr-0.5 ml-3.5 size-[13px]" fill="none" stroke="#555">
        <circle cx="5.500" cy="2" r="1.300" />
        <path d="M1 4.500 4 5.500v3L2 12M10 4.500 7 5.500v2M5.500 8.500V12M7.500 8l4.500 4.500M12 8l-4.500 4.500" />
      </svg>
      <span>Accessibility: Investigate</span>
      <div className="ml-auto flex h-full items-center">
        <Tool label="Normal view" className="w-[29px] bg-[#959595]">
          <svg viewBox="0 0 11 10" className="h-2.5 w-[11px]" fill="none" stroke="#fff" strokeWidth="0.900"><path d="M.5.5h10v9H.5zM4 .5v9M7 .5v9M.5 3.500h10M.5 6.500h10" /></svg>
        </Tool>
        <Tool label="Page layout" className="w-[29px]">
          <svg viewBox="0 0 11 11" className="size-[11px]" fill="none" stroke="#555"><path d="M.5.5h10v10H.5zM3 2.500h5v6H3zM4.500 4h2M4.500 5.500h2M4.500 7h2" /></svg>
        </Tool>
        <Tool label="Page break preview" className="w-[27px]">
          <svg viewBox="0 0 11 11" className="size-[11px]" fill="none" stroke="#555"><path d="M.5.5h10v10H.5zM3.500.5v6h3.500v-6M7 6.500h3.500" /></svg>
        </Tool>
        <Tool label="Zoom out"><i className="h-[2px] w-[7px] bg-[#555]" /></Tool>
        <input
          type="range"
          aria-label="Zoom"
          min={0}
          max={100}
          defaultValue={40}
          className="h-[3px] w-[80px] appearance-none rounded-full bg-[#888] [&::-webkit-slider-thumb]:size-3 [&::-webkit-slider-thumb]:appearance-none [&::-webkit-slider-thumb]:rounded-full [&::-webkit-slider-thumb]:bg-[#f3f3f3] [&::-webkit-slider-thumb]:shadow"
        />
        <Tool label="Zoom in" className="w-[18px]">
          <svg viewBox="0 0 8 8" className="size-[7px]" stroke="#444" strokeWidth="1.600"><path d="M4 0v8M0 4h8" /></svg>
        </Tool>
        <span className="w-[52px] pl-2.5">80%</span>
      </div>
    </div>
  );
}

function DockApp({ name, bg, dot = false, badge, children }: { name: string; bg: string; dot?: boolean; badge?: string; children?: React.ReactNode }) {
  return (
    <button aria-label={name} className={`relative flex size-[27px] shrink-0 items-center justify-center rounded-[6px] ${bg}`}>
      {children}
      {badge && (
        <span className="absolute -top-[3px] -right-[3px] flex h-3 min-w-3 items-center justify-center rounded-full bg-[#e5303a] px-0.5 text-[7px] text-white">
          {badge}
        </span>
      )}
      {dot && <i className="absolute top-[31px] size-[3px] rounded-full bg-[#1c0a48]" />}
    </button>
  );
}

const petals = ["#f6a821", "#e8d22c", "#8cc63e", "#3fae8a", "#4f8fd8", "#8a6cc9", "#d9569a", "#ee5a3a"];

function Dock() {
  return (
    <footer className="mx-7 mt-1.5 flex h-[43px] shrink-0 items-start rounded-xl border border-white/25 bg-linear-to-r from-[#6743bd] via-[#9a2df5] via-70% to-[#7426e4] px-1.5 pt-[6px]">
      <div className="flex flex-1 justify-between">
        <DockApp name="Finder" bg="bg-white" dot>
          <svg viewBox="0 0 27 27" className="absolute inset-0">
            <rect width="27" height="27" rx="6" fill="#e8f1f8" />
            <path d="M6 0h9.500C13 6 12 10 12 15h3.500c0 5 .5 9 1.500 12H6a6 6 0 0 1-6-6V6a6 6 0 0 1 6-6z" fill="#2aa7f0" />
            <path d="M7.500 8v3M19.500 8v3M5 18.500c5 4.500 12 4.500 17 0" fill="none" stroke="#12233a" strokeWidth="1.200" strokeLinecap="round" />
          </svg>
        </DockApp>
        <DockApp name="Launchpad" bg="bg-[#c9b3e6]">
          <div className="grid grid-cols-3 gap-[2px] [&>i]:size-[5px] [&>i]:rounded-[1px]">
            <i className="bg-[#58b848]" /><i className="bg-[#e8912d]" /><i className="bg-[#e8552d]" />
            <i className="bg-[#c52a3a]" /><i className="bg-[#888]" /><i className="bg-[#d6337a]" />
            <i className="bg-[#8a3fc9]" /><i className="bg-[#2f7de0]" /><i className="bg-[#3fb5c9]" />
          </div>
        </DockApp>
        <DockApp name="Safari" bg="bg-[#f2f4f6]" dot>
          <svg viewBox="0 0 24 24" className="size-6">
            <circle cx="12" cy="12" r="11.500" fill="#2b8fe8" stroke="#bcd5ea" strokeWidth="0.600" />
            <path d="M19.500 4.500 13.400 13.400 10.600 10.600z" fill="#e8413c" />
            <path d="M4.500 19.500 13.400 13.400 10.600 10.600z" fill="#f4f4f4" />
          </svg>
        </DockApp>
        <DockApp name="FaceTime" bg="bg-[#3bd254]">
          <svg viewBox="0 0 20 12" className="h-3 w-5" fill="#eafbea"><rect width="13" height="12" rx="3" /><path d="m14.500 4.500 4-3v9l-4-3z" /></svg>
        </DockApp>
        <DockApp name="Messages" bg="bg-[#3bd254]">
          <svg viewBox="0 0 20 18" className="h-[18px] w-5" fill="#eafbea"><ellipse cx="10" cy="8" rx="9.500" ry="7.500" /><path d="M4 12c0 3-.5 4-2 5.500 3 0 4.500-1 6-3z" /></svg>
        </DockApp>
        <DockApp name="Mail" bg="bg-linear-to-b from-[#1e6fe8] to-[#4cc2f8]" dot badge="461">
          <svg viewBox="0 0 20 14" className="h-3.5 w-5"><rect width="20" height="14" rx="2" fill="#f2f4f6" /><path d="m1 1.500 9 7 9-7M1 13l6.500-6M19 13l-6.500-6" fill="none" stroke="#8a98a6" strokeWidth="0.900" /></svg>
        </DockApp>
        <DockApp name="Maps" bg="bg-[#f0f0ec] overflow-hidden">
          <svg viewBox="0 0 27 27" className="size-[27px]">
            <path d="M0 0h12v9L0 14z" fill="#58c565" />
            <path d="M16 0h11v14z" fill="#8edb8a" />
            <path d="M10 0 27 20v7h-3L6 4z" fill="#fff" />
            <path d="M0 15 14 8v19H0z" fill="#f3a6c4" />
            <path d="M18 27V15l9 8v4z" fill="#f6d043" />
            <circle cx="10.500" cy="17" r="7" fill="#2b7de0" stroke="#fff" />
            <path d="m10.500 12.500 3.500 8-3.500-2-3.500 2z" fill="#fff" />
          </svg>
        </DockApp>
        <DockApp name="Photos" bg="bg-white">
          <svg viewBox="-13 -13 26 26" className="size-[26px]">
            {petals.map((c, i) => (
              <ellipse key={c} cx="0" cy="-6.500" rx="3.600" ry="5.300" fill={c} opacity="0.850" transform={`rotate(${i * 45})`} />
            ))}
          </svg>
        </DockApp>
        <DockApp name="Calendar" bg="bg-white overflow-hidden">
          <span className="absolute inset-x-0 top-0 h-2 bg-[#e8434a] text-center text-[6px] leading-[8px] font-bold text-white">AUG</span>
          <span className="pt-2 text-[16px] leading-[18px] font-light text-[#222]">26</span>
        </DockApp>
        <DockApp name="Contacts" bg="bg-[#94704a]">
          <svg viewBox="0 0 20 20" className="size-5" fill="none" stroke="#6d4f30"><circle cx="10" cy="10" r="8.500" /><circle cx="10" cy="8" r="3" fill="#7c5c3a" /><path d="M4.500 15.500c1.500-4 9.500-4 11 0" fill="#7c5c3a" /></svg>
        </DockApp>
        <DockApp name="Reminders" bg="bg-white">
          <svg viewBox="0 0 22 20" className="h-5 w-[22px]">
            <circle cx="3" cy="3.500" r="1.900" fill="#2f7de0" /><circle cx="3" cy="10" r="1.900" fill="#e8552d" /><circle cx="3" cy="16.500" r="1.900" fill="#e8a12d" />
            <path d="M7 3.500h14M7 10h14M7 16.500h14" stroke="#cfcfcf" strokeWidth="0.900" />
          </svg>
        </DockApp>
        <DockApp name="Notes" bg="bg-linear-to-b from-[#f8c92e] from-28% to-[#f2f0ea] to-28%">
          <svg viewBox="0 0 22 20" className="h-5 w-[22px]"><path d="M0 11h22M0 17h22" stroke="#d5d2c8" /></svg>
        </DockApp>
        <DockApp name="TV" bg="bg-[#15181a]">
          <span className="flex items-center text-[11px] font-medium text-white"><FaApple className="size-[9px]" />tv</span>
        </DockApp>
        <DockApp name="Music" bg="bg-linear-to-b from-[#f8465c] to-[#ee2a48]"><Music className="size-[18px] text-white" strokeWidth={2.2} /></DockApp>
        <DockApp name="Podcasts" bg="bg-linear-to-b from-[#a745d8] to-[#7a1fae]"><FaPodcast className="size-5 text-[#f0dcfa]" /></DockApp>
        <DockApp name="Keynote" bg="bg-white">
          <svg viewBox="0 0 20 24" className="h-6 w-5"><path d="M3 2h14l2 8H1z" fill="#2b8fe8" /><path d="M4 3.500h12l1 5H3z" fill="#9cd0f5" /><circle cx="10" cy="6" r="2.500" fill="#e8a12d" /><path d="M10 10v11M6 22h8" stroke="#7a8794" strokeWidth="1.500" /></svg>
        </DockApp>
        <DockApp name="Numbers" bg="bg-white">
          <svg viewBox="0 0 20 20" className="size-5"><path d="M1 15V20h4v-5z" fill="#e5303a" /><path d="M5.500 9h4v11h-4z" fill="#f08c35" /><path d="M10 0h4v20h-4z" fill="#4cc24a" /><path d="M14.500 4h4.500v16h-4.500z" fill="#2f7de0" /></svg>
        </DockApp>
        <DockApp name="Pages" bg="bg-white">
          <svg viewBox="0 0 22 24" className="h-6 w-[22px]"><path d="M20 2 10 19l-1.500 3L9 18.500 18 1z" fill="#ee9a34" stroke="#555" strokeWidth="0.700" /><path d="M8.500 22 9 18.500l1.500 1z" fill="#222" /><path d="M4.500 4C2 5 1 7 2 8.500s3 0 2-1.500-1.500 0-1-1S4.500 5 4.500 4zM9.500 4C7 5 6 7 7 8.500s3 0 2-1.500-1.500 0-1-1S9.500 5 9.500 4z" fill="#ee9a34" /></svg>
        </DockApp>
        <DockApp name="App Store" bg="bg-linear-to-b from-[#2ea0f5] to-[#1e68e4]" badge="7">
          <svg viewBox="0 0 20 20" className="size-5" fill="none" stroke="#fff" strokeWidth="2.200" strokeLinecap="round"><path d="M11.500 3 4.500 16M8.500 3l7.500 13M1.500 12.500h11M16 12.500h2.500" /></svg>
        </DockApp>
        <DockApp name="System Preferences" bg="bg-[#a9a9ad]">
          <svg viewBox="0 0 24 24" className="size-6" fill="none" stroke="#2b2b2e">
            <circle cx="12" cy="12" r="10" strokeWidth="2.500" strokeDasharray="1.500 .7" />
            <circle cx="12" cy="12" r="7.500" fill="#77777b" strokeWidth="1.800" />
            <circle cx="12" cy="12" r="2.500" />
            <path d="M14.500 12H20M10.700 9.800 8 5M10.700 14.200 8 19" strokeWidth="1.500" />
          </svg>
        </DockApp>
        <DockApp name="Excel" bg="bg-white" dot>
          <svg viewBox="0 0 21 18" className="h-[18px] w-[21px]"><rect x="5" width="15.500" height="18" rx="1" fill="#21a366" /><path d="M5 9h8v9H6a1 1 0 0 1-1-1z" fill="#185c37" /><path d="M13 0h7.500v9H13z" fill="#33c481" /><path d="M13 9h7.500v9H13z" fill="#107c41" /><rect y="4" width="10.500" height="10.500" rx="1" fill="#107c41" /><path d="m3 6.500 4.500 5.500M7.500 6.500 3 12" stroke="#fff" strokeWidth="1.400" /></svg>
        </DockApp>
        <DockApp name="Todoist" bg="bg-[#dd3b35]">
          <svg viewBox="0 0 20 20" className="mr-1.5 size-5" fill="none" stroke="#fff" strokeWidth="1.900"><path d="m1 4 5 3 11-5.500M1 9.500l5 3L17 7M1 15l5 3 11-5.500" /></svg>
        </DockApp>
      </div>
      <i className="mx-3 h-[30px] w-px bg-[#5a18b0]" />
      <div className="flex gap-2">
        <DockApp name="CorelDRAW" bg="bg-[#0d7a1e] overflow-visible" dot>
          <svg viewBox="0 0 27 27" className="absolute inset-0"><path d="M6 0h21v21L22 25 0 6a6 6 0 0 1 6-6z" fill="#2be02f" /><path d="m5 6 3.500-.5L20.500 17.500l-3.500 4L5 9.500z" fill="#f4f4f4" /></svg>
        </DockApp>
        <DockApp name="Telegram" bg="bg-white" dot>
          <span className="flex size-[23px] items-center justify-center rounded-full bg-[#2f9fdc]"><FaTelegramPlane className="size-3.5 text-white" /></span>
        </DockApp>
        <DockApp name="QuickTime" bg="bg-[#2b2d33]" dot>
          <svg viewBox="0 0 24 24" className="size-6"><circle cx="12" cy="12" r="8.500" fill="#2f9fe8" stroke="#c7ced6" strokeWidth="3.500" /><path d="m13 13 9 7.500-3 2z" fill="#c7ced6" stroke="#c7ced6" strokeWidth="1.500" /><circle cx="11" cy="11" r="3.500" fill="#7fdcf8" /></svg>
        </DockApp>
      </div>
      <i className="mx-3 h-[30px] w-px bg-[#5a18b0]" />
      <div className="flex gap-[5px]">
        <button aria-label="Document" className="-mt-0.5 flex w-[27px] justify-center">
          <svg viewBox="0 0 20 32" className="h-8 w-5"><path d="M0 0h20v32H0z" fill="#f2f2f2" /><path d="M0 0h20v3H0z" fill="#333" /><path d="M2 6h7M2 9h10M2 12h8M2 16h13M2 20h10M2 24h14M2 27h9" stroke="#777" /><path d="M12 5h8v7h-8z" fill="#ddd" /></svg>
        </button>
        {[
          ["Workbook window", "#1d8a4a"],
          ["Finder window", "#2aa7f0"],
          ["QuickTime window", "#2b2d33"],
        ].map(([name, color], i) => (
          <button key={name} aria-label={name} className="mt-[5px] h-6 w-[31px]">
            <svg viewBox="0 0 31 24" className="h-6 w-[31px]">
              <rect width="31" height={i === 1 ? 15 : 17} fill="#f6f6f6" />
              <path d="M0 0h31v3H0z" fill="#d9d9d9" />
              {i === 0 && <path d="M14 5h14v10H14z" fill="#bdbdbd" />}
              {i === 1 && <path d="M2 5h26" stroke="#ccc" />}
              {i === 2 && <path d="M1 6h29v9H1zM9 6v7M18 6v7M1 13h29" fill="#eee" stroke="#777" />}
              <rect x="20" y="13" width="10.500" height="10.500" rx="2" fill={color} stroke="#e8e8f4" strokeWidth="0.700" />
              {i === 0 && <path d="m23 16 4.500 5M27.500 16 23 21" stroke="#fff" strokeWidth="1.300" />}
              {i === 1 && <path d="M26 13.500h4.500v9.500H26z" fill="#e8f1f8" />}
              {i === 2 && <circle cx="25.200" cy="18.200" r="3.200" fill="#2f9fe8" stroke="#cdd" strokeWidth="1.200" />}
            </svg>
          </button>
        ))}
        <button aria-label="Bin" className="-mt-0.5 flex w-[27px] justify-center">
          <svg viewBox="0 0 25 31" className="h-[31px] w-[25px]">
            <path d="M1.500 4h22l-2.500 24q-8.500 5-17 0z" fill="#d6d6db" />
            <ellipse cx="12.500" cy="4.500" rx="11.500" ry="3.500" fill="#eee" stroke="#aaa" strokeWidth="0.700" />
            <path d="m4 4 4-3 3 4 4-4 4 3 2 1-5 2-8-.5z" fill="#444" />
            <path d="m7 4 3-3 2 3zM14 5l3-4 3 4z" fill="#fff" />
            <path d="M7 10l1 17M12.500 10v18M18 10l-1 17" stroke="#c2c2c8" />
          </svg>
        </button>
      </div>
    </footer>
  );
}

export default function App() {
  return (
    <div className="h-screen w-full overflow-hidden bg-black px-16 font-['Inter',sans-serif] leading-tight">
      <div className="flex h-full flex-col bg-linear-to-r from-[#23076a] to-[#4702b8]">
        <MenuBar />
        <div className="flex min-h-0 flex-1 flex-col bg-linear-to-b from-[#a0269a] to-transparent to-20% pt-px">
          <main className="flex min-h-0 flex-1 flex-col overflow-hidden rounded-lg bg-linear-to-b from-[#f5f5f5] to-[#e9e9e9]">
            <TitleBar />
            <RibbonTabs />
            <Ribbon />
            <FormulaBar />
            <Sheet />
            <SheetTabs />
            <StatusBar />
          </main>
        </div>
        <Dock />
        <div className="h-1 shrink-0" />
      </div>
    </div>
  );
}
